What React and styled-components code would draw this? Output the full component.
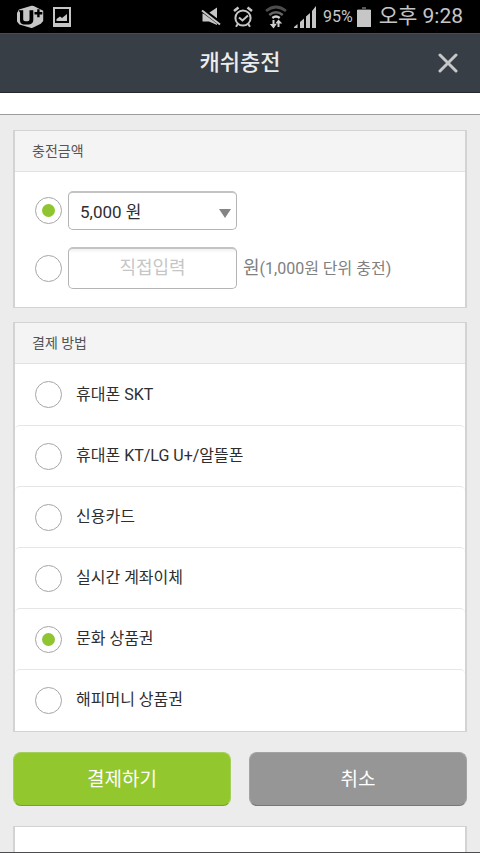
import React, { useState } from "react";
import styled, { createGlobalStyle } from "styled-components";

const GlobalStyle = createGlobalStyle`
  *, *::before, *::after { box-sizing: border-box; }
  body {
    margin: 0;
    background: #ececec;
    font-family: Roboto, "Noto Sans CJK KR", sans-serif;
    color: #2e2e2e;
  }
  button, input, select { font: inherit; }
`;

const Page = styled.div`
  display: flex;
  flex-direction: column;
  min-height: 100vh;
  border-bottom: 1px solid #4d4b50;
`;

const StatusBar = styled.div`
  display: flex;
  align-items: center;
  height: 33px;
  padding: 0 17px 0 16px;
  background: #000;
  color: #c6c6c6;
`;

const StatusIcons = styled.div`
  display: flex;
  align-items: center;
  gap: ${(p) => p.$gap}px;
  margin-right: ${(p) => p.$after};
`;

const Battery = styled.span`
  display: flex;
  align-items: center;
  gap: 4px;
  margin-right: 8px;
  font-size: 16px;
  line-height: 33px;
`;

const Clock = styled.span`
  font-size: 21px;
  line-height: 31px;
  white-space: nowrap;
`;

const Header = styled.header`
  display: grid;
  grid-template-columns: 64px 1fr 64px;
  align-items: center;
  height: 60px;
  background: #373e46;
  border-top: 1px solid #454b52;
  border-bottom: 1px solid #23282f;
`;

const Title = styled.h1`
  grid-column: 2;
  margin: 0;
  text-align: center;
  font-size: 22px;
  line-height: 32px;
  font-weight: 500;
  color: #ececec;
`;

const CloseButton = styled.button`
  display: flex;
  align-items: center;
  justify-content: center;
  height: 48px;
  padding: 0;
  border: 0;
  background: none;
  color: #c8c8c8;
`;

const Strip = styled.div`
  height: 22px;
  background: #fff;
  border-bottom: 1px solid #9c9c9c;
`;

const Content = styled.form`
  display: flex;
  flex: 1;
  flex-direction: column;
  padding: 15px 13px 0;
`;

const Panel = styled.section`
  margin-bottom: 14px;
  border: 2px solid #d3d3d3;
  border-top-width: 1px;
  border-bottom-width: 1px;
  background: #fff;
`;

const PanelTitle = styled.h2`
  margin: 0;
  padding: 0 17px;
  border-bottom: 1px solid #e2e2e2;
  background: #f4f4f4;
  font-size: 14px;
  line-height: 40px;
  font-weight: 400;
  color: #555;
`;

const AmountList = styled.div`
  display: flex;
  flex-direction: column;
  gap: 17px;
  padding: 19px 20px 18px;
`;

const AmountRow = styled.div`
  display: flex;
  align-items: center;
  gap: 6px;
`;

const Radio = styled.input.attrs({ type: "radio" })`
  appearance: none;
  display: flex;
  flex: none;
  align-items: center;
  justify-content: center;
  width: 27px;
  height: 27px;
  margin: 0;
  border: 1px solid #a6a6a6;
  border-radius: 50%;
  background: #fff;

  &:checked::before {
    content: "";
    width: 13px;
    height: 13px;
    border-radius: 50%;
    background: #8fc530;
  }
`;

const SelectBox = styled.div`
  display: grid;
  align-items: center;
  width: 169px;

  & > * { grid-area: 1 / 1; }
  & > svg { justify-self: end; margin: 5px 6px 0 0; pointer-events: none; }
`;

const Select = styled.select`
  appearance: none;
  width: 100%;
  height: 39px;
  padding: 1px 24px 0 11px;
  border: 1px solid #b4b4b4;
  border-top: 2px solid #c4c4c4;
  border-radius: 5px;
  background: #fff;
  font-size: 17px;
  color: #2e2e2e;
`;

const AmountInput = styled.input`
  width: 169px;
  height: 42px;
  padding: 0 10px 2px;
  border: 1px solid #b4b4b4;
  border-top: 2px solid #c4c4c4;
  border-radius: 5px;
  background: linear-gradient(#f0f0f0, #fff 4px);
  font-size: 18px;
  text-align: center;
  color: #2e2e2e;

  &::placeholder { color: #c6c6c6; opacity: 1; }
`;

const Unit = styled.span`
  font-size: 18px;
  line-height: 28px;
  white-space: nowrap;
  color: #808080;
`;

const UnitNote = styled.small`
  font-size: 16px;
`;

const MethodList = styled.ul`
  margin: 0;
  padding: 0 0 1px;
  list-style: none;
`;

const MethodItem = styled.li`
  & + & {
    border-top: 1px solid #e6e6e6;
    border-radius: 5px;
  }
`;

const MethodLabel = styled.label`
  display: flex;
  align-items: center;
  gap: 14px;
  height: 60px;
  padding: 0 20px;
  font-size: 16px;
  line-height: 24px;

  ${MethodItem}:first-child & { height: 61px; }
`;

const Actions = styled.div`
  display: grid;
  grid-template-columns: 1fr 1fr;
  gap: 18px;
  margin: 6px 0 20px;
`;

const ActionButton = styled.button`
  height: 54px;
  padding: 0 0 4px;
  border: 1px solid ${(p) => (p.$primary ? "#a5cf5c" : "#a3a3a3")};
  border-bottom-color: ${(p) => (p.$primary ? "#75a51f" : "#777")};
  border-radius: 8px;
  background: ${(p) => (p.$primary ? "#92c72e" : "#969696")};
  font-size: 19px;
  color: #fff;
`;

const NoticePanel = styled(Panel)`
  flex: 1;
  margin: 0;
  border-bottom: 0;
`;

const CarrierIcon = () => (
  <svg width="29" height="24" viewBox="0 0 29 24" aria-hidden="true">
    <path d="M3 4.500 15.500.8q1.200-.3 2.200.3l9.500 4.600V16l-2.400 2.800-7.600 3.800q-1.300.7-2.700.1L3.400 19.600 1 16.500V8Z" fill="#c6c6c6" />
    <path d="M3 5.200h4.200v9.300q0 1.800 2 1.800h2.600q1.700 0 1.700-1.800V5.200h3.800v9.900q0 4-4.300 4.300H7.600q-3.600-.3-3.600-4.100V6.700H3Z" fill="#000" />
    <path d="M22.400 4.200v8M18.500 8.200h7.800" stroke="#000" strokeWidth="2.400" fill="none" />
  </svg>
);

const PictureIcon = () => (
  <svg width="18" height="20" viewBox="0 0 18 20" aria-hidden="true">
    <path d="M1 1h16v18H1Z" fill="none" stroke="#c6c6c6" strokeWidth="2" />
    <path d="M1 17.500h16" stroke="#c6c6c6" strokeWidth="3" />
    <path d="M3.500 14V12L7 9.500 9 11l5-4V14Z" fill="#c6c6c6" />
  </svg>
);

const MuteIcon = () => (
  <svg width="20" height="20" viewBox="0 0 20 20" aria-hidden="true">
    <path d="M1.500 6.500H7L16 .5v17.500l-8-3.500H1.500Z" fill="#c6c6c6" />
    <path d="m0 2 20 15" stroke="#000" strokeWidth="4.500" />
    <path d="m1 3.500 18 14" stroke="#c6c6c6" strokeWidth="2" />
  </svg>
);

const AlarmIcon = () => (
  <svg width="20" height="22" viewBox="0 0 20 22" fill="none" stroke="#c6c6c6" aria-hidden="true">
    <circle cx="10" cy="12" r="7.600" strokeWidth="2" />
    <path d="m6 11.500 3.500 3 5.500-5" strokeWidth="2" />
    <path d="m1 5 4.500-3.600M19 5l-4.500-3.600" strokeWidth="2.600" />
    <path d="m4.800 18-1.800 2.800M15.200 18l1.800 2.800" strokeWidth="2" />
  </svg>
);

const WifiIcon = () => (
  <svg width="22" height="24" viewBox="0 0 22 24" fill="none" aria-hidden="true">
    <path d="M1 6q10-8 20 0" stroke="#4c4c4c" strokeWidth="2.800" />
    <path d="M4.300 10q6.700-5.500 13.400 0" stroke="#666" strokeWidth="2.600" />
    <path d="M7.300 13q3.700-3 7.400 0" stroke="#d0d0d0" strokeWidth="2.400" />
    <path d="M8.500 15v6M13.500 22v-6" stroke="#d0d0d0" strokeWidth="2" />
    <path d="m4.800 19 3.700 4.500 3.200-4.500ZM10.300 18.500l3.200-4 3.700 4Z" fill="#d0d0d0" />
  </svg>
);

const SignalIcon = () => (
  <svg width="22" height="22" viewBox="0 0 22 22" fill="#c6c6c6" aria-hidden="true">
    <path d="M0 22v-1l3.500-3v4ZM6 22v-6l4-3.500V22ZM12 22V10.500L16 7v15ZM18 22V5l4-5v22Z" />
  </svg>
);

const BatteryIcon = () => (
  <svg width="14" height="20" viewBox="0 0 14 20" aria-hidden="true">
    <path d="M5 0h4v2h4.500v2H.5V2H5Z" fill="#555" />
    <path d="M0 3h14v17H0Z" fill="#c6c6c6" />
  </svg>
);

const CloseIcon = () => (
  <svg width="20" height="20" viewBox="0 0 20 20" aria-hidden="true">
    <path d="m2 2 16 16M18 2 2 18" stroke="currentColor" strokeWidth="3" strokeLinecap="round" />
  </svg>
);

const ArrowIcon = () => (
  <svg width="12" height="9" viewBox="0 0 12 9" aria-hidden="true">
    <path d="M0 0h12L6 9Z" fill="#858585" />
  </svg>
);

const METHODS = [
  "휴대폰 SKT",
  "휴대폰 KT/LG U+/알뜰폰",
  "신용카드",
  "실시간 계좌이체",
  "문화 상품권",
  "해피머니 상품권",
];

export default function App() {
  const [amountType, setAmountType] = useState("preset");
  const [method, setMethod] = useState("문화 상품권");

  return (
    <Page>
      <GlobalStyle />
      <StatusBar>
        <StatusIcons $gap={8} $after="auto">
          <CarrierIcon />
          <PictureIcon />
        </StatusIcons>
        <StatusIcons $gap={12} $after="7px">
          <MuteIcon />
          <AlarmIcon />
          <WifiIcon />
        </StatusIcons>
        <StatusIcons $gap={0} $after="7px">
          <SignalIcon />
        </StatusIcons>
        <Battery>
          95%
          <BatteryIcon />
        </Battery>
        <Clock>오후 9:28</Clock>
      </StatusBar>
      <Header>
        <Title>캐쉬충전</Title>
        <CloseButton type="button" aria-label="닫기">
          <CloseIcon />
        </CloseButton>
      </Header>
      <Strip />
      <Content onSubmit={(e) => e.preventDefault()}>
        <Panel>
          <PanelTitle>충전금액</PanelTitle>
          <AmountList>
            <AmountRow>
              <Radio
                name="amount"
                aria-label="금액 선택"
                checked={amountType === "preset"}
                onChange={() => setAmountType("preset")}
              />
              <SelectBox>
                <Select aria-label="충전금액" defaultValue="5000">
                  <option value="5000">5,000 원</option>
                </Select>
                <ArrowIcon />
              </SelectBox>
            </AmountRow>
            <AmountRow>
              <Radio
                name="amount"
                aria-label="직접입력"
                checked={amountType === "custom"}
                onChange={() => setAmountType("custom")}
              />
              <AmountInput
                id="custom-amount"
                type="text"
                inputMode="numeric"
                aria-label="직접입력 금액"
                placeholder="직접입력"
              />
              <Unit as="label" htmlFor="custom-amount">
                원<UnitNote>(1,000원 단위 충전)</UnitNote>
              </Unit>
            </AmountRow>
          </AmountList>
        </Panel>
        <Panel>
          <PanelTitle>결제 방법</PanelTitle>
          <MethodList>
            {METHODS.map((name) => (
              <MethodItem key={name}>
                <MethodLabel>
                  <Radio
                    name="method"
                    value={name}
                    checked={method === name}
                    onChange={() => setMethod(name)}
                  />
                  {name}
                </MethodLabel>
              </MethodItem>
            ))}
          </MethodList>
        </Panel>
        <Actions>
          <ActionButton type="submit" $primary>
            결제하기
          </ActionButton>
          <ActionButton type="button">취소</ActionButton>
        </Actions>
        <NoticePanel />
      </Content>
    </Page>
  );
}
